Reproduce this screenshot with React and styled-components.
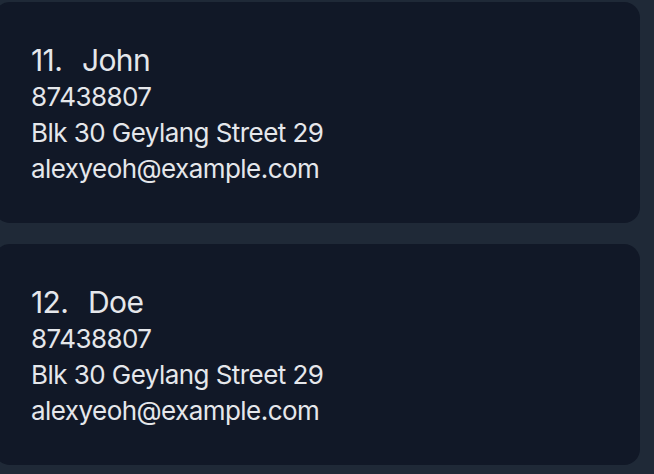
import React from "react";
import styled, { createGlobalStyle } from "styled-components";

const Global = createGlobalStyle`
  html, body {
    margin: 0;
    padding: 0;
    background: #1f2937;
    overflow: hidden;
  }
  body {
    font-family: Inter, "Noto Sans", sans-serif;
  }
`;

const List = styled.div`
  display: flex;
  flex-direction: column;
  gap: 21px;
  padding: 2px 14px 0 0;
  margin-left: -6px;
`;

const Card = styled.div`
  background: #111827;
  border-radius: 16px;
  padding: 39px 37px 36px;
  display: flex;
  flex-direction: column;
  color: #e5e7eb;
`;

const Name = styled.div`
  font-size: 30px;
  line-height: 38px;
  letter-spacing: -0.6px;
  word-spacing: 2px;
  white-space: pre;
`;

const Field = styled.div`
  font-size: 26px;
  line-height: 36px;
  letter-spacing: -0.55px;
`;

const people = [
  { idx: 11, name: "John", phone: "87438807", address: "Blk 30 Geylang Street 29", email: "alexyeoh@example.com" },
  { idx: 12, name: "Doe", phone: "87438807", address: "Blk 30 Geylang Street 29", email: "alexyeoh@example.com" },
];

export default function App() {
  return (
    <>
      <Global />
      <List>
        {people.map((p) => (
          <Card key={p.idx}>
            <Name>{`${p.idx}.  ${p.name}`}</Name>
            <Field>{p.phone}</Field>
            <Field>{p.address}</Field>
            <Field>{p.email}</Field>
          </Card>
        ))}
      </List>
    </>
  );
}
